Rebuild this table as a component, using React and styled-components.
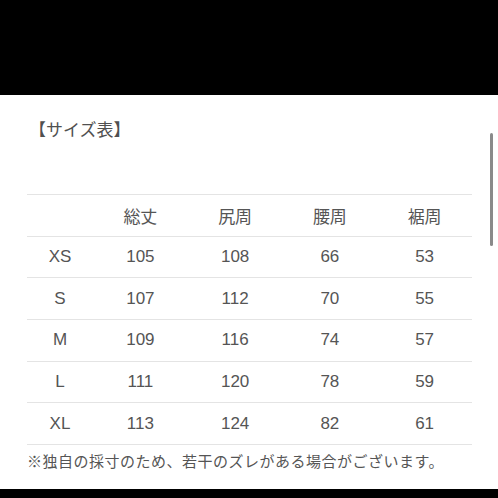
import React from 'react'
import styled, { createGlobalStyle } from 'styled-components'

const GlobalStyle = createGlobalStyle`
  html, body {
    margin: 0;
    padding: 0;
    background: #000;
  }
  body {
    font-family: "Liberation Sans", "Noto Sans CJK JP", sans-serif;
  }
`

const columns = ['', '総丈', '尻周', '腰周', '裾周']
const rows = [
  ['XS', 105, 108, 66, 53],
  ['S', 107, 112, 70, 55],
  ['M', 109, 116, 74, 57],
  ['L', 111, 120, 78, 59],
  ['XL', 113, 124, 82, 61],
]

const Page = styled.div`
  width: 498px;
  height: 498px;
  display: grid;
  grid-template-rows: 95px 394px 9px;
  background: #000;
`

const Band = styled.div`
  background: #000;
`

const Panel = styled.div`
  position: relative;
  background: #fff;
  padding: 0 26px 0 27px;
  color: #555;
`

const Title = styled.h2`
  margin: 0;
  padding: 22px 0 0 2px;
  height: 99px;
  box-sizing: border-box;
  font-size: 17px;
  font-weight: 400;
  line-height: 24px;
  color: #505050;
  font-family: "Noto Sans CJK JP", sans-serif;
`

const Table = styled.div`
  display: grid;
  grid-template-columns: 66px repeat(4, 1fr);
  border-top: 1px solid #e4e4e4;
`

const Row = styled.div`
  display: contents;
`

const Cell = styled.div`
  height: 41.67px;
  box-sizing: border-box;
  border-bottom: 1px solid #e4e4e4;
  display: flex;
  align-items: center;
  justify-content: center;
  font-size: 17px;
  color: #555;
  font-family: ${p => (p.$head ? '"Noto Sans CJK JP", sans-serif' : '"Liberation Sans", "Noto Sans CJK JP", sans-serif')};
`

const Note = styled.p`
  margin: 0;
  padding-top: 5px;
  font-size: 15px;
  letter-spacing: 0.5px;
  line-height: 22px;
  color: #555;
  white-space: nowrap;
  font-family: "Noto Sans CJK JP", sans-serif;
`

const Scrollbar = styled.div`
  position: absolute;
  right: 5px;
  top: 38px;
  width: 3px;
  height: 113px;
  border-radius: 2px;
  background: #8a8a8a;
`

export default function App() {
  return (
    <>
      <GlobalStyle />
      <Page>
        <Band />
        <Panel>
          <Title>【サイズ表】</Title>
          <Table>
            <Row>
              {columns.map((c, i) => (
                <Cell key={i} $head>{c}</Cell>
              ))}
            </Row>
            {rows.map((r) => (
              <Row key={r[0]}>
                {r.map((v, i) => (
                  <Cell key={i}>{v}</Cell>
                ))}
              </Row>
            ))}
          </Table>
          <Note>※独自の採寸のため、若干のズレがある場合がございます。</Note>
          <Scrollbar />
        </Panel>
        <Band />
      </Page>
    </>
  )
}
